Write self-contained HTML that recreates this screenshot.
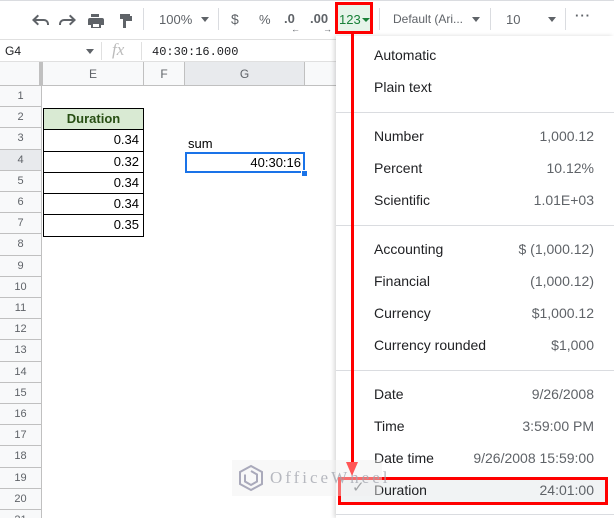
<!DOCTYPE html><html style="overflow:hidden"><head><style>
html,body{margin:0;width:614px;height:518px;overflow:hidden}
body{background:#fff;font-family:"Liberation Sans",Arial,sans-serif;position:relative}
.a{position:absolute}
.tb{left:0;top:0;width:614px;height:38px;background:#fff;border-top:1px solid #dadce0}
.ic{color:#5f6368;font-size:13px}
.rh{left:0;width:42px;text-align:center;font-size:11px;color:#5f6368;background:#f8f9fa;border-bottom:1px solid #c0c0c0;border-right:1px solid #c0c0c0;box-sizing:border-box}
.ch{top:62px;height:24px;background:#f8f9fa;border-right:1px solid #c0c0c0;border-bottom:1px solid #c0c0c0;box-sizing:border-box;text-align:center;font-size:12px;color:#5f6368;line-height:24px}
.cell{left:43px;width:101px;border:1px solid #000;border-top:none;box-sizing:border-box;text-align:right;font-size:13px;padding-right:4px;line-height:20px}
.mi{left:374px;width:220px;font-size:14px;color:#202124}
.mi span{float:right;color:#5f6368}
.dv{left:336px;width:278px;height:1px;background:#dadce0}
</style></head><body>
<div class="a tb"></div>
<svg class="a" style="left:30px;top:10px" width="115" height="20" viewBox="0 0 115 20" fill="#5f6368">
<path d="M4 9h8a5 5 0 0 1 5 5v1h-2v-1a3 3 0 0 0-3-3H4l3 3-1.4 1.4L0 10 5.6 4.6 7 6z" transform="translate(2,0)"/>
<path d="M40 9h-8a5 5 0 0 0-5 5v1h2v-1a3 3 0 0 1 3-3h8l-3 3 1.4 1.4L44 10 38.4 4.6 37 6z" transform="translate(2,0)"/>
<path d="M61 4h8v3h-8zM58 8h14a2 2 0 0 1 2 2v5h-3v3h-10v-3h-3v-5a2 2 0 0 1 2-2zm5 6v3h6v-3z"/>
<path d="M90 4h10v5h-10zM100 6h2v5h-6v7h-3v-9h7z"/>
</svg>
<div class="a" style="left:143px;top:8px;width:1px;height:22px;background:#dadce0"></div>
<div class="a" style="left:159px;top:12px;font-size:13px;color:#5f6368">100%</div>
<div class="a" style="left:201px;top:17px;border:4px solid transparent;border-top:5px solid #5f6368"></div>
<div class="a" style="left:218px;top:8px;width:1px;height:22px;background:#dadce0"></div>
<div class="a ic" style="left:231px;top:11px;font-size:14px">$</div>
<div class="a ic" style="left:259px;top:12px">%</div>
<div class="a ic" style="left:284px;top:11px;font-weight:bold">.0<span style="font-size:9px;position:absolute;left:7px;top:13px">←</span></div>
<div class="a ic" style="left:310px;top:11px;font-weight:bold">.00<span style="font-size:9px;position:absolute;left:13px;top:13px">→</span></div>
<div class="a" style="left:335px;top:2px;width:38px;height:32px;background:#e6f4ea;border:3px solid #f00;box-sizing:border-box"></div>
<div class="a" style="left:339px;top:12px;font-size:13px;color:#188038">123</div>
<div class="a" style="left:362px;top:18px;border:4px solid transparent;border-top:4px solid #188038"></div>
<div class="a" style="left:379px;top:8px;width:1px;height:22px;background:#dadce0"></div>
<div class="a ic" style="left:393px;top:12px;font-size:12px">Default (Ari...</div>
<div class="a" style="left:472px;top:17px;border:4px solid transparent;border-top:5px solid #5f6368"></div>
<div class="a" style="left:490px;top:8px;width:1px;height:22px;background:#dadce0"></div>
<div class="a ic" style="left:506px;top:12px">10</div>
<div class="a" style="left:548px;top:17px;border:4px solid transparent;border-top:5px solid #5f6368"></div>
<div class="a" style="left:565px;top:8px;width:1px;height:22px;background:#dadce0"></div>
<div class="a ic" style="left:575px;top:8px;font-weight:bold;letter-spacing:1px">···</div>
<div class="a" style="left:0;top:39px;width:614px;height:23px;border-top:1px solid #e0e0e0;border-bottom:1px solid #e0e0e0;box-sizing:border-box"></div>
<div class="a" style="left:5px;top:44px;font-size:12px;color:#202124">G4</div>
<div class="a" style="left:86px;top:49px;border:4px solid transparent;border-top:5px solid #5f6368"></div>
<div class="a" style="left:101px;top:42px;width:1px;height:18px;background:#e0e0e0"></div>
<div class="a" style="left:112px;top:40px;font-size:17px;color:#bbb;font-style:italic;font-family:'Liberation Serif',serif">fx</div>
<div class="a" style="left:141px;top:42px;width:1px;height:18px;background:#e0e0e0"></div>
<div class="a" style="left:152px;top:45px;font-size:12px;color:#202124;font-family:'Liberation Mono',monospace">40:30:16.000</div>
<div class="a ch" style="left:0;width:43px;border-right:4px solid #c0c0c0"></div>
<div class="a ch" style="left:43px;width:101px">E</div>
<div class="a ch" style="left:144px;width:41px">F</div>
<div class="a ch" style="left:185px;width:120px;background:#e8eaed">G</div>
<div class="a ch" style="left:305px;width:40px;border-right:none"></div>
<div class="a" style="left:0;top:0;width:614px;height:518px;overflow:hidden"><div id="rows"></div></div>
<script>
let h='';for(let n=1;n<=21;n++){let t=86+(n-1)*21.2;h+=`<div class="a rh" style="top:${t}px;height:21.2px;line-height:21px;${n==4?'background:#e8eaed':''}">${n}</div>`}
document.getElementById('rows').innerHTML=h;
</script>
<div class="a" style="left:43px;top:108px;width:101px;height:22px;background:#d9ead3;border:1px solid #000;box-sizing:border-box;text-align:center;font-weight:bold;font-size:13px;color:#274e13;line-height:20px">Duration</div>
<div class="a cell" style="top:130px;height:22px">0.34</div>
<div class="a cell" style="top:152px;height:21px">0.32</div>
<div class="a cell" style="top:173px;height:21px">0.34</div>
<div class="a cell" style="top:194px;height:21px">0.34</div>
<div class="a cell" style="top:215px;height:22px">0.35</div>
<div class="a" style="left:188px;top:136px;font-size:13px">sum</div>
<div class="a" style="left:185px;top:152px;width:120px;height:21px;border:2px solid #1a73e8;box-sizing:border-box;text-align:right;font-size:13px;padding-right:2px;line-height:17px">40:30:16</div>
<div class="a" style="left:301px;top:170px;width:5px;height:5px;background:#1a73e8;border:1px solid #fff"></div>
<div class="a" style="left:336px;top:36px;width:278px;height:482px;background:#fff;box-shadow:-2px 0 4px rgba(0,0,0,.15)"></div>
<div class="a mi" style="top:47px">Automatic</div>
<div class="a mi" style="top:79px">Plain text</div>
<div class="a dv" style="top:112px"></div>
<div class="a mi" style="top:128px">Number<span>1,000.12</span></div>
<div class="a mi" style="top:160px">Percent<span>10.12%</span></div>
<div class="a mi" style="top:192px">Scientific<span>1.01E+03</span></div>
<div class="a dv" style="top:225px"></div>
<div class="a mi" style="top:241px">Accounting<span>$ (1,000.12)</span></div>
<div class="a mi" style="top:273px">Financial<span>(1,000.12)</span></div>
<div class="a mi" style="top:305px">Currency<span>$1,000.12</span></div>
<div class="a mi" style="top:337px">Currency rounded<span>$1,000</span></div>
<div class="a dv" style="top:370px"></div>
<div class="a mi" style="top:386px">Date<span>9/26/2008</span></div>
<div class="a mi" style="top:418px">Time<span>3:59:00 PM</span></div>
<div class="a mi" style="top:450px">Date time<span>9/26/2008 15:59:00</span></div>
<div class="a" style="left:338px;top:477px;width:270px;height:28px;background:#f1f3f4;border:3px solid #f00;box-sizing:border-box"></div>
<div class="a" style="left:352px;top:478px;font-size:15px;color:#5f6368">✓</div>
<div class="a mi" style="top:482px">Duration<span>24:01:00</span></div>
<div class="a dv" style="top:514px"></div>
<div class="a" style="left:232px;top:460px;width:150px;height:36px;background:rgba(240,240,240,.45)"></div>
<svg class="a" style="left:238px;top:464px" width="26" height="28" viewBox="0 0 26 28" fill="none" stroke="#aab" stroke-width="2"><path d="M13 2L24 8v12L13 26 2 20V8z"/><path d="M13 7l6 3.5v7L13 21l-6-3.5v-7"/></svg>
<div class="a" style="left:270px;top:468px;font-family:'Liberation Serif',serif;font-size:17px;color:rgba(160,163,172,.75);letter-spacing:3px">OfficeWheel</div>
<div class="a" style="left:351px;top:34px;width:3px;height:430px;background:#f00"></div>
<div class="a" style="left:346px;top:462px;border-left:6.5px solid transparent;border-right:6.5px solid transparent;border-top:14px solid #f55"></div>
</body></html>
